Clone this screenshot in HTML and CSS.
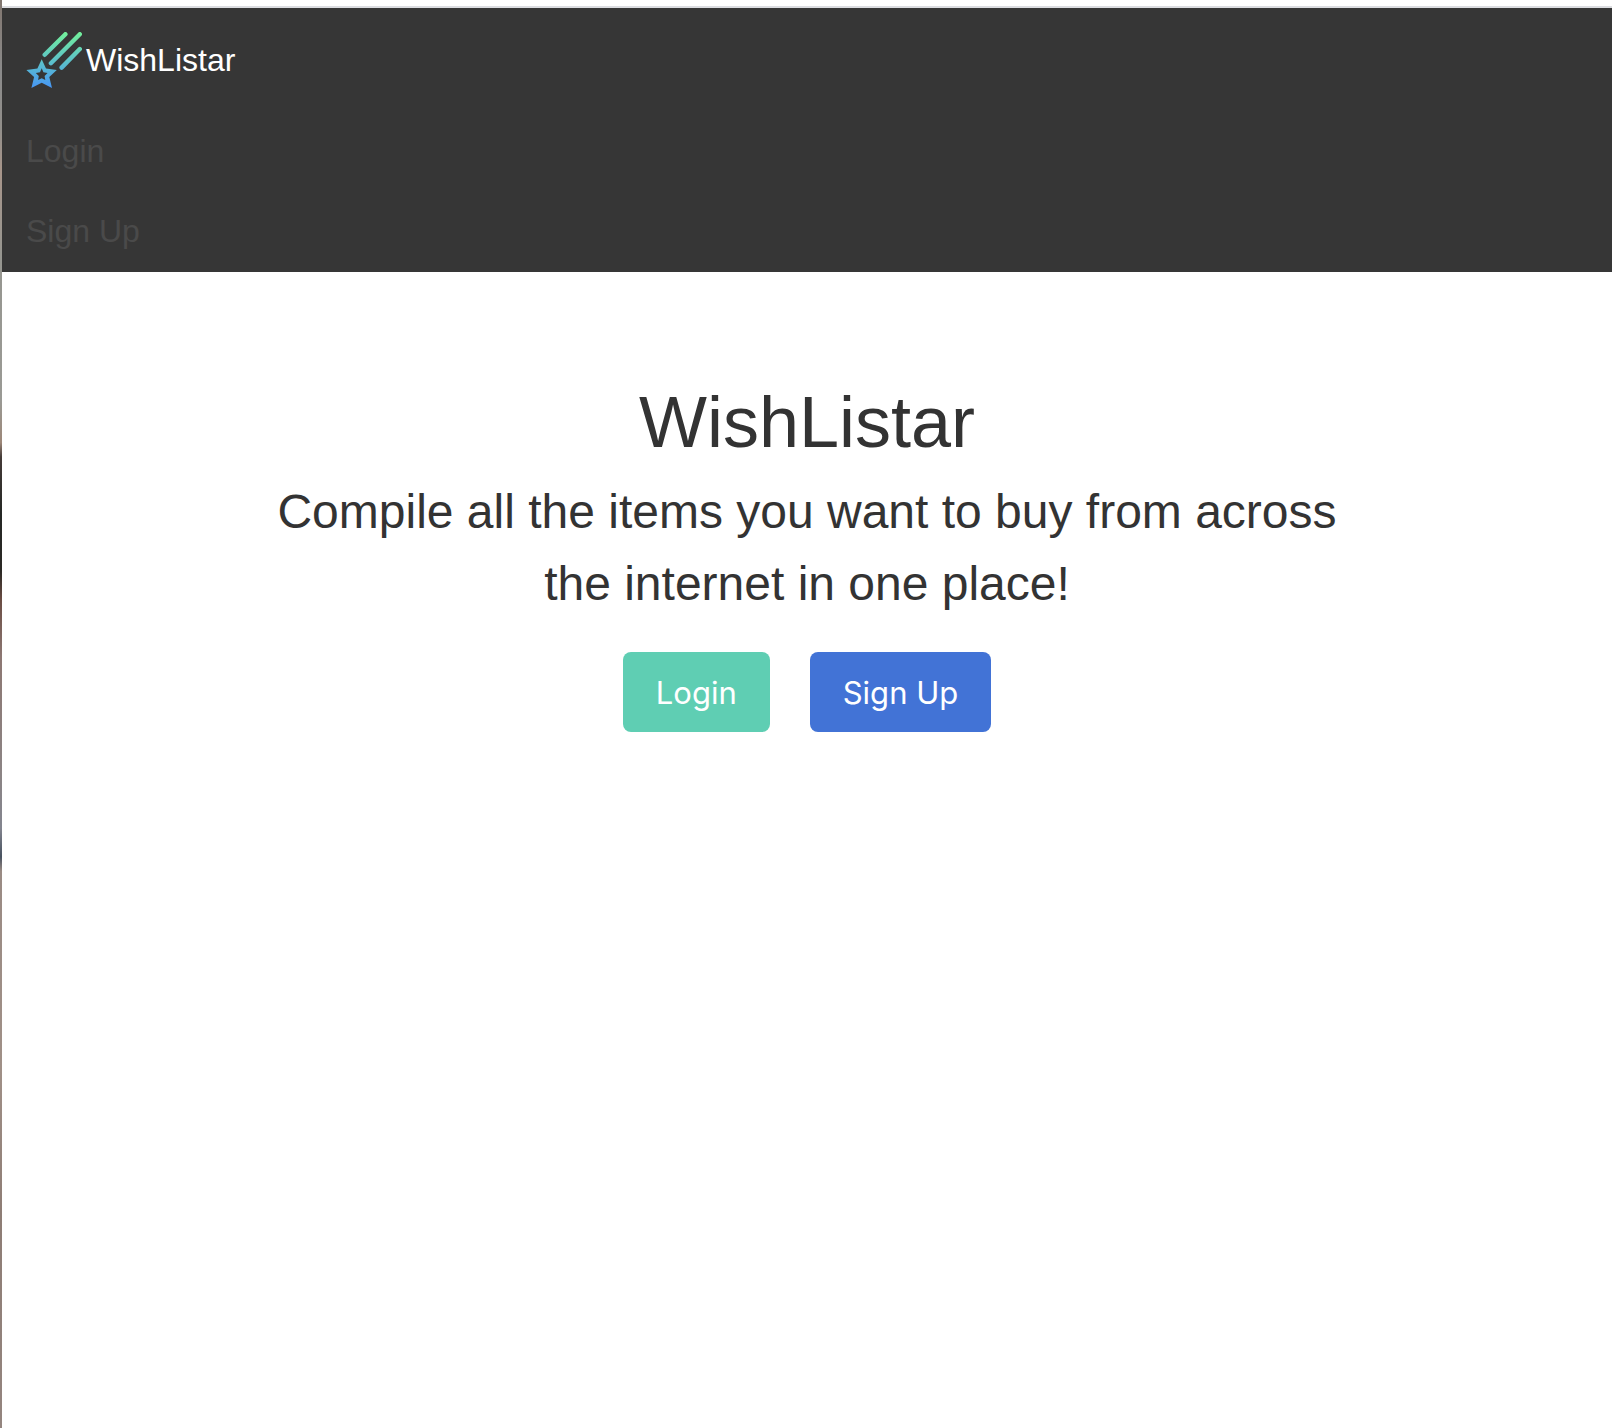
FILE: index.html
```html
<!DOCTYPE html>
<html lang="en">
<head>
  <meta charset="utf-8">
  <title>WishListar</title>
  <link rel="stylesheet" href="styles.css">
</head>
<body>
  <div class="edge"></div>
  <div class="page">
    <div class="topline"></div>
    <nav class="navbar">
      <a class="brand" href="#">
        <svg class="logo" viewBox="0 0 56 56" aria-hidden="true">
          <defs>
            <linearGradient id="sky" gradientUnits="userSpaceOnUse" x1="0" y1="0" x2="0" y2="56">
              <stop offset="0" stop-color="#73f09a"/>
              <stop offset="1" stop-color="#4796f5"/>
            </linearGradient>
          </defs>
          <path d="M18.7 22.8 39.4 2.2M24.9 31.2 53.8 2.2M35.6 35.6 53.8 17" fill="none" stroke="url(#sky)" stroke-width="4.4" stroke-linecap="round"/>
          <path fill="url(#sky)" fill-rule="evenodd" d="M15.7 27.2 20 36.4 30.8 37.9 23.3 45 26 56 15.7 50.8 5.4 56 8.1 45 .4 37.9 11.4 36.4ZM15.7 36.3 14 40.2 9.8 40.9 12.8 43.9 12.1 48.1 15.7 46.2 19.3 48.1 18.6 43.9 21.6 40.9 17.4 40.2Z"/>
        </svg>
        <span>WishListar</span>
      </a>
      <a class="nav-item" href="#login">Login</a>
      <a class="nav-item" href="#signup">Sign Up</a>
    </nav>
    <main class="hero">
      <h1 class="title">WishListar</h1>
      <p class="subtitle">Compile all the items you want to buy from across the internet in one place!</p>
      <div class="actions">
        <button class="button button-login" type="button">Login</button>
        <button class="button button-signup" type="button">Sign Up</button>
      </div>
    </main>
  </div>
</body>
</html>
```
FILE: styles.css
```css
* {
  box-sizing: border-box;
}

body {
  margin: 0;
  min-height: 100vh;
  display: flex;
  background: #fff;
  color: #333;
  font-family: "Liberation Sans", Arial, sans-serif;
  font-size: 32px;
  line-height: 48px;
}

.edge {
  flex: none;
  width: 2px;
  background: linear-gradient(#81766f 0%, #8b8b8b 5%, #928f8b 9%, #a8968b 12%, #969690 18%, #9a9a95 28%, #9c8778 31%, #453b38 32%, #252825 36%, #2b2925 40%, #6b4d44 42%, #8d7873 46%, #8c8484 54%, #83858f 58%, #485260 60%, #9a8b84 61%, #a09087 75%, #8e7d75 85%, #94857f 100%);
}

.page {
  flex: 1;
  min-width: 0;
}

.topline {
  height: 8px;
  border-bottom: 2px solid #dcdde1;
}

.navbar {
  background: #363636;
}

.brand,
.nav-item {
  display: flex;
  align-items: center;
  padding: 15px 24px 17px;
  text-decoration: none;
}

.brand {
  gap: 4px;
  padding: 24px;
  color: #fff;
}

.logo {
  width: 56px;
  height: 56px;
}

.nav-item {
  color: #4a4a4a;
}

.hero {
  padding: 96px 24px;
  text-align: center;
}

.title {
  margin: 0;
  font-size: 72px;
  font-weight: 400;
  line-height: 108px;
}

.subtitle {
  width: 70%;
  margin: 0 auto 32px;
  font-size: 48px;
  line-height: 72px;
}

.actions {
  display: flex;
  justify-content: center;
  gap: 40px;
}

.button {
  height: 80px;
  padding: 2px 33px 0;
  border: 0;
  border-radius: 8px;
  color: #fff;
  font-family: Inter, sans-serif;
  font-size: 31px;
  line-height: 48px;
}

.button-login {
  background: #5fceb3;
}

.button-signup {
  background: #4273d6;
}
```
